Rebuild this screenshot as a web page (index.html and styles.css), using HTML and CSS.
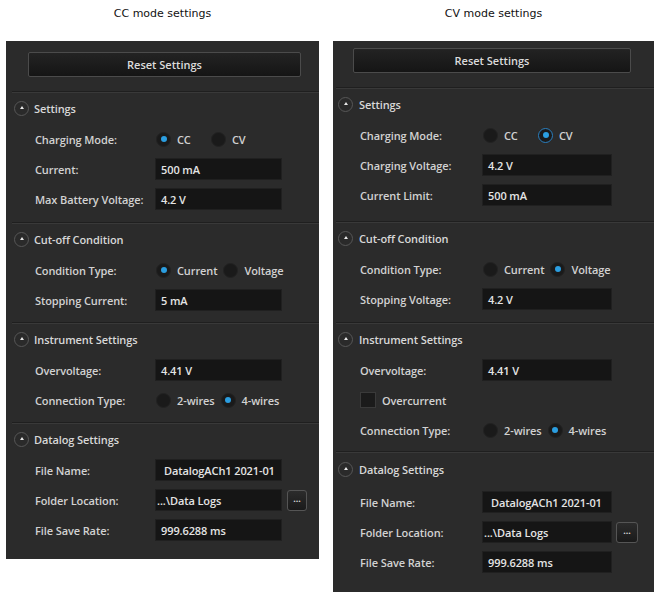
FILE: index.html
```html
<!DOCTYPE html>
<html lang="en">
<head>
<meta charset="utf-8">
<title>Mode settings</title>
<link rel="stylesheet" href="styles.css">
</head>
<body>
<div class="page">
  <div class="col col-cc">
    <div class="title">CC mode settings</div>
    <div class="panel panel-cc">
      <button class="reset">Reset Settings</button>
      <section class="sec">
        <div class="hdr"><span class="tog"></span>Settings</div>
        <div class="row"><span class="lbl">Charging Mode:</span>
          <span class="opt opt-fixed"><span class="radio on"></span>CC</span>
          <span class="opt opt-fixed"><span class="radio"></span>CV</span>
        </div>
        <div class="row"><span class="lbl">Current:</span><span class="field">500 mA</span></div>
        <div class="row"><span class="lbl">Max Battery Voltage:</span><span class="field">4.2 V</span></div>
      </section>
      <section class="sec sec-tight">
        <div class="hdr"><span class="tog"></span>Cut-off Condition</div>
        <div class="row"><span class="lbl">Condition Type:</span>
          <span class="opt"><span class="radio on"></span>Current</span>
          <span class="opt"><span class="radio"></span>Voltage</span>
        </div>
        <div class="row"><span class="lbl">Stopping Current:</span><span class="field">5 mA</span></div>
      </section>
      <section class="sec sec-tight">
        <div class="hdr"><span class="tog"></span>Instrument Settings</div>
        <div class="row"><span class="lbl">Overvoltage:</span><span class="field">4.41 V</span></div>
        <div class="row"><span class="lbl">Connection Type:</span>
          <span class="opt"><span class="radio"></span>2-wires</span>
          <span class="opt"><span class="radio on"></span>4-wires</span>
        </div>
      </section>
      <section class="sec">
        <div class="hdr"><span class="tog"></span>Datalog Settings</div>
        <div class="row"><span class="lbl">File Name:</span><span class="field field-name">DatalogACh1 2021-01</span></div>
        <div class="row"><span class="lbl">Folder Location:</span><span class="field field-folder">...\Data Logs</span><button class="browse">...</button></div>
        <div class="row"><span class="lbl">File Save Rate:</span><span class="field">999.6288 ms</span></div>
      </section>
    </div>
  </div>

  <div class="col col-cv">
    <div class="title">CV mode settings</div>
    <div class="panel panel-cv">
      <button class="reset">Reset Settings</button>
      <section class="sec sec-wide">
        <div class="hdr"><span class="tog"></span>Settings</div>
        <div class="row"><span class="lbl">Charging Mode:</span>
          <span class="opt opt-fixed"><span class="radio"></span>CC</span>
          <span class="opt opt-fixed"><span class="radio on focus"></span>CV</span>
        </div>
        <div class="row"><span class="lbl">Charging Voltage:</span><span class="field">4.2 V</span></div>
        <div class="row"><span class="lbl">Current Limit:</span><span class="field">500 mA</span></div>
      </section>
      <section class="sec">
        <div class="hdr"><span class="tog"></span>Cut-off Condition</div>
        <div class="row"><span class="lbl">Condition Type:</span>
          <span class="opt"><span class="radio"></span>Current</span>
          <span class="opt"><span class="radio on"></span>Voltage</span>
        </div>
        <div class="row"><span class="lbl">Stopping Voltage:</span><span class="field">4.2 V</span></div>
      </section>
      <section class="sec sec-snug">
        <div class="hdr"><span class="tog"></span>Instrument Settings</div>
        <div class="row"><span class="lbl">Overvoltage:</span><span class="field">4.41 V</span></div>
        <div class="row row-check"><span class="check"></span>Overcurrent</div>
        <div class="row"><span class="lbl">Connection Type:</span>
          <span class="opt"><span class="radio"></span>2-wires</span>
          <span class="opt"><span class="radio on"></span>4-wires</span>
        </div>
      </section>
      <section class="sec">
        <div class="hdr hdr-tall"><span class="tog"></span>Datalog Settings</div>
        <div class="row"><span class="lbl">File Name:</span><span class="field field-name">DatalogACh1 2021-01</span></div>
        <div class="row"><span class="lbl">Folder Location:</span><span class="field field-folder">...\Data Logs</span><button class="browse">...</button></div>
        <div class="row"><span class="lbl">File Save Rate:</span><span class="field">999.6288 ms</span></div>
      </section>
    </div>
  </div>
</div>
</body>
</html>
```

FILE: styles.css
```css
html, body {
  margin: 0;
  padding: 0;
  background: #ffffff;
}

.page {
  display: flex;
  align-items: flex-start;
  gap: 14px;
  padding-left: 6px;
}

.col {
  display: flex;
  flex-direction: column;
}

.col-cc { width: 313px; }
.col-cv { width: 321px; }

.title {
  height: 41px;
  box-sizing: border-box;
  padding-top: 7px;
  line-height: 14px;
  text-align: center;
  font-family: "DejaVu Sans", Verdana, sans-serif;
  font-size: 11px;
  color: #111;
}

.panel {
  background: #2b2b2b;
  display: flex;
  flex-direction: column;
  font-family: "Open Sans", "Liberation Sans", sans-serif;
  font-weight: 600;
  font-size: 11px;
  letter-spacing: -0.1px;
  color: #d2d2d2;
}

.panel-cc { padding: 11px 0 6px 0; }
.panel-cv { padding: 7px 0 7px 0; }

.reset {
  height: 25px;
  margin-bottom: 14px;
  border: 1px solid #4b4b4b;
  border-radius: 2px;
  background: linear-gradient(#232323, #151515);
  color: #dcdcdc;
  font-family: "Open Sans", "Liberation Sans", sans-serif;
  font-weight: 600;
  font-size: 11px;
  padding: 0;
}

.panel-cc .reset { margin-left: 22px; margin-right: 18px; }
.panel-cv .reset { margin-left: 20px; margin-right: 23px; }

.sec {
  border-top: 1px solid #1f1f1f;
  box-shadow: inset 0 1px 0 #393939;
  padding-bottom: 8px;
}

.panel-cc .sec { margin-left: 6px; padding-left: 2px; }
.panel-cv .sec { margin-left: 3px; padding-left: 2px; }
.sec.sec-tight { padding-bottom: 7px; }
.sec.sec-wide { padding-bottom: 11px; }
.sec.sec-snug { padding-bottom: 6px; }

.hdr {
  height: 32px;
  display: flex;
  align-items: center;
  gap: 5px;
  color: #d8d8d8;
}

.panel-cv .hdr { gap: 6px; }
.hdr.hdr-tall { height: 35px; padding-bottom: 1px; box-sizing: border-box; }

.tog {
  width: 13px;
  height: 13px;
  border: 1px solid #575757;
  border-radius: 50%;
  background: #2a2a2a;
  display: flex;
  align-items: center;
  justify-content: center;
  flex: none;
}

.tog::before {
  content: "";
  width: 0;
  height: 0;
  border-left: 2.5px solid transparent;
  border-right: 2.5px solid transparent;
  border-bottom: 3px solid #e8e8e8;
  margin-top: -1px;
}

.row {
  height: 30px;
  display: flex;
  align-items: center;
  white-space: nowrap;
}

.panel-cc .row { padding-left: 21px; }
.panel-cv .row { padding-left: 22px; }

.lbl {
  flex: none;
  width: 120px;
}

.panel-cv .lbl { width: 122px; }

.field {
  box-sizing: border-box;
  height: 22px;
  width: 127px;
  display: flex;
  align-items: center;
  padding-left: 5px;
  background: #151515;
  border: 1px solid #202020;
  color: #e4e4e4;
  overflow: hidden;
}

.panel-cv .field { width: 130px; }

.field-name { padding-left: 8px; }
.field-folder { padding-left: 1px; }

.browse {
  margin-left: 5px;
  width: 20px;
  height: 21px;
  padding: 0 0 3px 0;
  border: 1px solid #555;
  border-radius: 3px;
  background: linear-gradient(#2c2c2c, #1a1a1a);
  color: #d8d8d8;
  font-family: "Open Sans", sans-serif;
  font-weight: 700;
  font-size: 9px;
  line-height: 1;
}

.panel-cv .browse { margin-left: 4px; width: 22px; }

.opt {
  display: flex;
  align-items: center;
  gap: 6px;
  margin-right: 5px;
}

.opt-fixed {
  width: 55px;
  margin-right: 0;
}

.radio {
  box-sizing: border-box;
  width: 15px;
  height: 15px;
  border-radius: 50%;
  background: #1a1a1a;
  border: 1px solid #222;
  margin-left: 1px;
  display: flex;
  align-items: center;
  justify-content: center;
  flex: none;
}

.radio.on::before {
  content: "";
  width: 6px;
  height: 6px;
  border-radius: 50%;
  background: #2b9ee0;
}

.radio.focus {
  border: 1.5px solid #2a7fbf;
}

.row-check { gap: 6px; }

.check {
  box-sizing: border-box;
  width: 16px;
  height: 16px;
  background: #1b1b1b;
  border: 1px solid #3a3a3a;
  flex: none;
}
```
